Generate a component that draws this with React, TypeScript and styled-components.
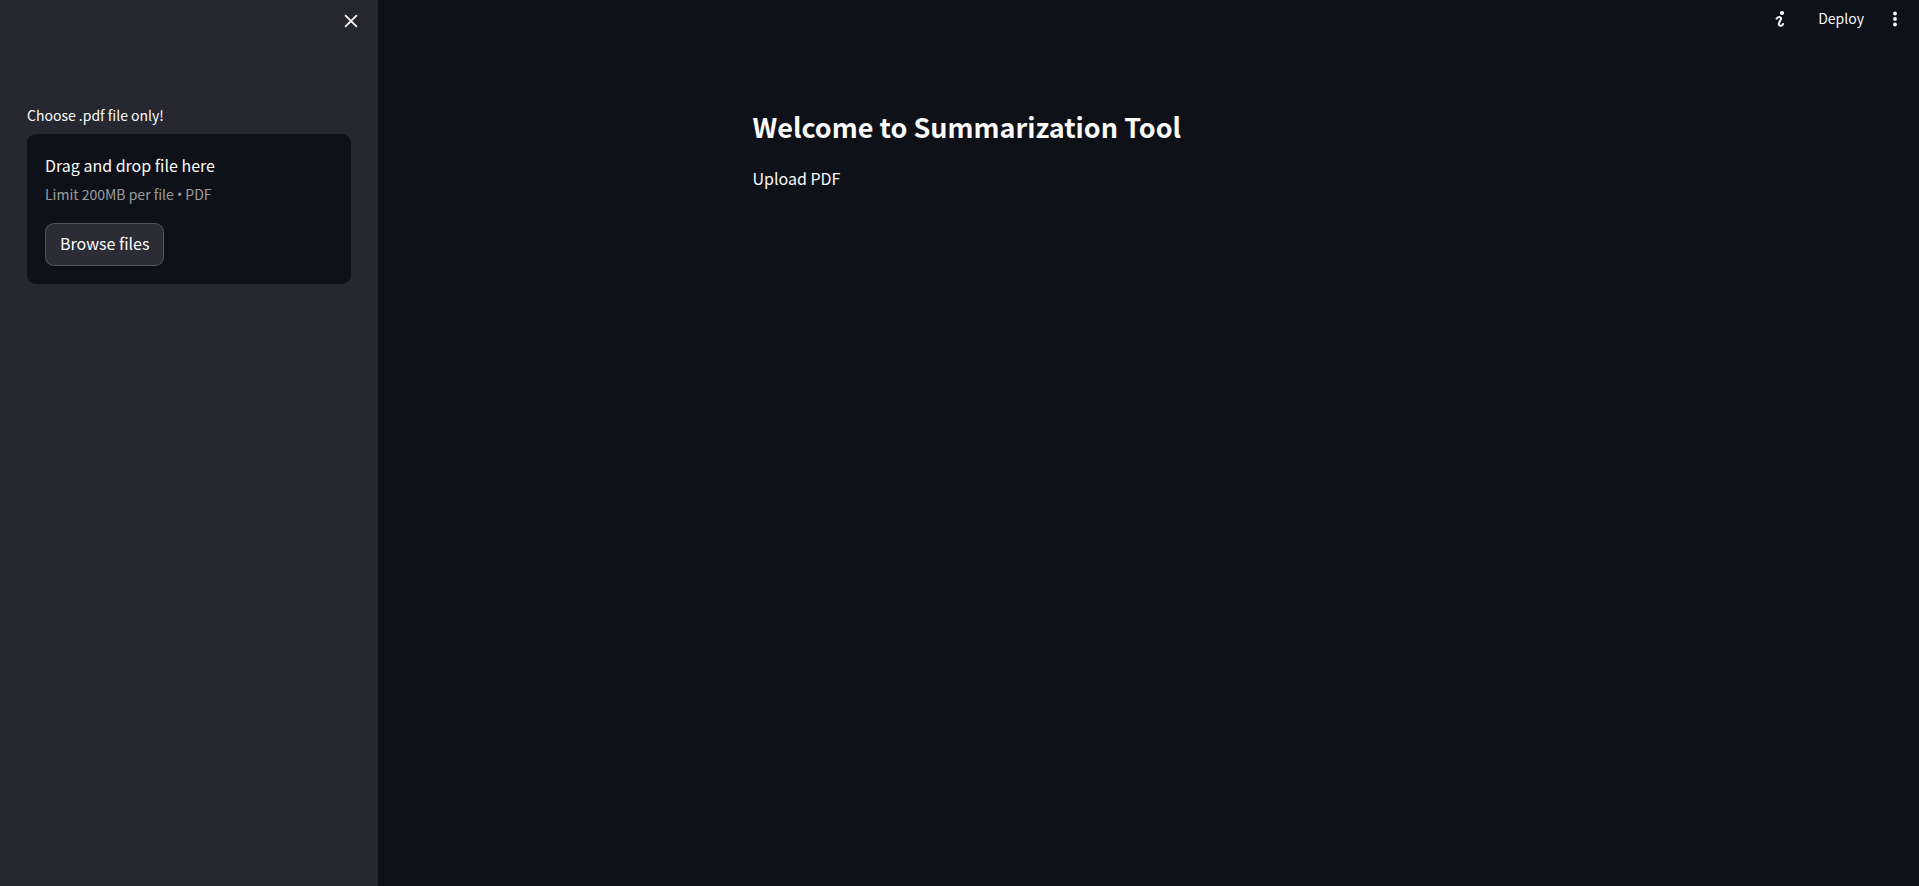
import React from "react";
import styled, { createGlobalStyle } from "styled-components";

const GlobalStyle = createGlobalStyle`
  *, *::before, *::after { box-sizing: border-box; }
  body {
    margin: 0;
    background: #0e1117;
    color: #fafafa;
    font-family: "Source Sans Pro", "Noto Sans CJK SC", sans-serif;
    font-size: 16px;
    line-height: 28px;
  }
  h1, p { margin: 0; }
`;

const Page = styled.div`
  display: flex;
  min-height: 100vh;
`;

const Sidebar = styled.aside`
  flex: 0 0 378px;
  background: #262730;
`;

const SidebarHeader = styled.div`
  display: flex;
  justify-content: flex-end;
  height: 102px;
  padding: 7px 13px;
`;

const IconButton = styled.button`
  display: flex;
  align-items: center;
  justify-content: center;
  width: 28px;
  height: 28px;
  padding: 0;
  border: 0;
  border-radius: 9px;
  background: transparent;
  color: inherit;
  cursor: pointer;
`;

const Uploader = styled.section`
  display: flex;
  flex-direction: column;
  padding: 0 27px;
`;

const UploaderLabel = styled.label`
  margin-bottom: 6px;
  font-size: 14px;
  line-height: 26px;
`;

const DropZone = styled.div`
  display: flex;
  flex-direction: column;
  align-items: flex-start;
  padding: 18px;
  border-radius: 9px;
  background: #0e1117;
`;

const Instruction = styled.span`
  margin-bottom: 4px;
  line-height: 26px;
`;

const Limit = styled.small`
  margin-bottom: 16px;
  color: rgba(250, 250, 250, 0.6);
  font-size: 14px;
  line-height: 25px;
`;

const Bullet = styled.span`
  font-family: "Open Sans", sans-serif;
  line-height: 1;
`;

const HiddenFile = styled.input`
  display: none;
`;

const BrowseButton = styled.button`
  height: 43px;
  padding: 0 14px 3px;
  border: 1px solid rgba(250, 250, 250, 0.2);
  border-radius: 9px;
  background: #2b2c36;
  color: inherit;
  font: inherit;
  cursor: pointer;
`;

const Main = styled.main`
  flex: 1;
  min-width: 0;
`;

const Toolbar = styled.header`
  display: flex;
  align-items: center;
  justify-content: flex-end;
  gap: 9px;
  height: 38px;
  padding: 0 10px;
`;

const DeployButton = styled.button`
  height: 28px;
  padding: 0 8px 2px 15px;
  border: 0;
  background: transparent;
  color: inherit;
  font: inherit;
  font-size: 14px;
  line-height: 26px;
  cursor: pointer;
`;

const Content = styled.div`
  max-width: 828px;
  margin: 0 auto;
  padding: 70px 18px 180px;
`;

const Title = styled.h1`
  margin-bottom: 18px;
  font-size: 27px;
  font-weight: 700;
  line-height: 38px;
`;

const CloseIcon = () => (
  <svg width="14" height="14" viewBox="0 0 14 14" fill="none" stroke="currentColor" strokeWidth="1.8" strokeLinecap="round" aria-hidden="true">
    <path d="M1.6 1.6 12.4 12.4M12.4 1.6 1.6 12.4" />
  </svg>
);

const InfoIcon = () => (
  <svg width="12" height="18" viewBox="0 0 12 18" fill="none" stroke="currentColor" strokeWidth="2" strokeLinecap="round" strokeLinejoin="round" aria-hidden="true">
    <circle cx="8" cy="3" r="2.1" fill="currentColor" stroke="none" />
    <path d="M2.6 8.6C3.6 7.400 5.200 6.900 6.300 7.300c1.300.6.7 1.900 0 3.100-.9 1.700-2.300 3.900-1 4.900 1.400 1 3.400.2 3.700-1.300" />
  </svg>
);

const MenuIcon = () => (
  <svg width="4" height="16" viewBox="0 0 4 16" fill="currentColor" aria-hidden="true">
    <circle cx="2" cy="2.500" r="1.900" />
    <circle cx="2" cy="8" r="1.900" />
    <circle cx="2" cy="13.500" r="1.900" />
  </svg>
);

export default function App() {
  const fileInput = React.useRef<HTMLInputElement>(null);
  return (
    <>
      <GlobalStyle />
      <Page>
        <Sidebar>
          <SidebarHeader>
            <IconButton type="button" aria-label="Close sidebar">
              <CloseIcon />
            </IconButton>
          </SidebarHeader>
          <Uploader>
            <UploaderLabel htmlFor="pdf-file">Choose .pdf file only!</UploaderLabel>
            <DropZone>
              <Instruction>Drag and drop file here</Instruction>
              <Limit>
                Limit 200MB per file <Bullet>•</Bullet> PDF
              </Limit>
              <HiddenFile ref={fileInput} id="pdf-file" type="file" accept=".pdf" />
              <BrowseButton type="button" onClick={() => fileInput.current?.click()}>
                Browse files
              </BrowseButton>
            </DropZone>
          </Uploader>
        </Sidebar>
        <Main>
          <Toolbar>
            <IconButton type="button" aria-label="Information">
              <InfoIcon />
            </IconButton>
            <DeployButton type="button">Deploy</DeployButton>
            <IconButton type="button" aria-label="Main menu">
              <MenuIcon />
            </IconButton>
          </Toolbar>
          <Content>
            <Title>Welcome to Summarization Tool</Title>
            <p>Upload PDF</p>
          </Content>
        </Main>
      </Page>
    </>
  );
}
